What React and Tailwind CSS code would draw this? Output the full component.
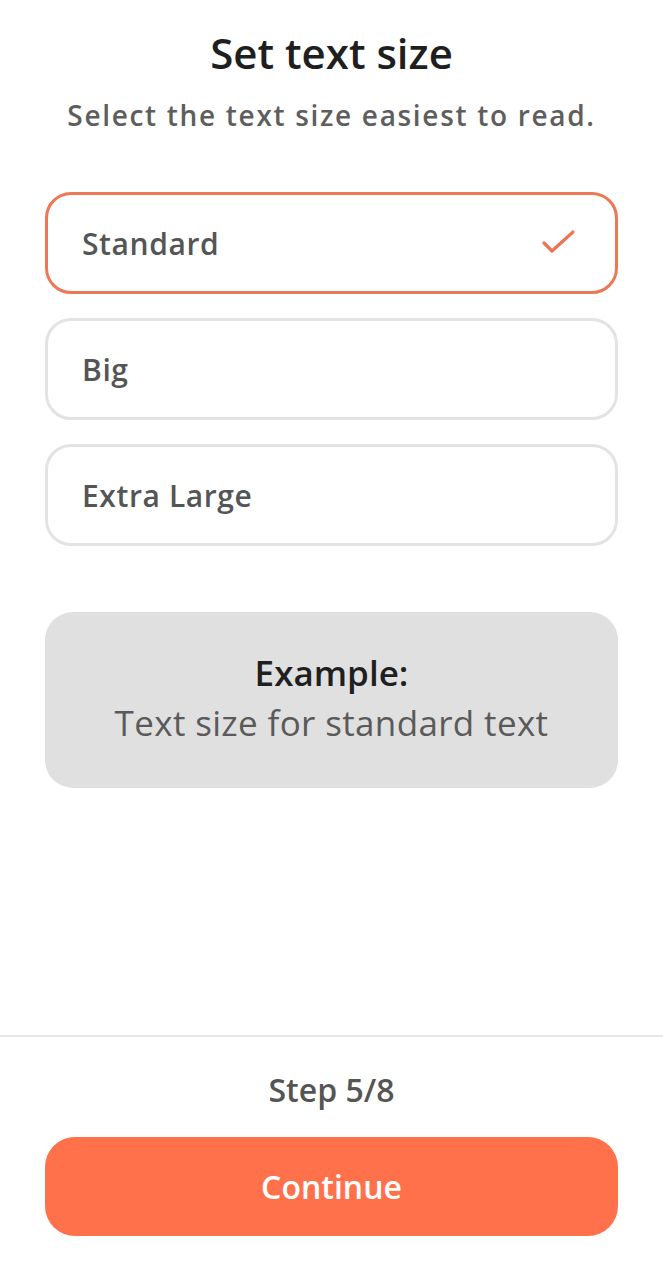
import React, { useState } from "react";

const options = ["Standard", "Big", "Extra Large"];

const CheckMark = () => (
  <svg width="38" height="30" viewBox="0 0 38 30" fill="none">
    <path
      d="M5 15 L13 23 L34 4"
      stroke="#ef7352"
      strokeWidth="3.2"
      strokeLinecap="round"
      strokeLinejoin="round"
    />
  </svg>
);

const App = () => {
  const [selected, setSelected] = useState("Standard");

  return (
    <div
      className="min-h-screen bg-white flex flex-col"
      style={{ fontFamily: "'Open Sans', Lato, sans-serif" }}
    >
      <main className="px-[45px] pt-[27px] flex flex-col">
        <h1 className="text-center text-[42px] leading-[52px] font-semibold text-[#1f1f1f]">
          Set text size
        </h1>
        <p className="text-center text-[28px] leading-[36px] font-semibold text-[#5e5e5e] mt-[18px] tracking-[0.06em]">
          Select the text size easiest to read.
        </p>

        {/* opciones */}
        <div className="flex flex-col gap-[24px] mt-[59px]">
          {options.map((opt) => {
            const active = opt === selected;
            return (
              <button
                key={opt}
                onClick={() => setSelected(opt)}
                className={
                  active
                    ? "h-[102px] rounded-[26px] border-[3px] border-[#ee7755] bg-white flex items-center justify-between pl-[34px] pr-[38px] text-left"
                    : "h-[102px] rounded-[26px] border-[3px] border-[#e3e3e3] bg-white flex items-center justify-between pl-[34px] pr-[38px] text-left"
                }
              >
                <span className="text-[30px] font-semibold text-[#555555] tracking-[0.02em]">
                  {opt}
                </span>
                {active && <CheckMark />}
              </button>
            );
          })}
        </div>

        <div className="mt-[66px] h-[176px] rounded-[28px] bg-[#e0e0e0] flex flex-col items-center justify-center pb-[4px]">
          <span className="text-[35px] leading-[44px] font-semibold text-[#1f1f1f]">
            Example:
          </span>
          <span className="text-[35px] leading-[44px] text-[#5a5a5a] mt-[6px] tracking-[0.01em]">
            Text size for standard text
          </span>
        </div>
      </main>

      <footer className="mt-auto border-t-2 border-[#e8e8e8] px-[45px] pt-[35px] pb-[44px] flex flex-col items-center">
        <span className="text-[32px] leading-[36px] font-semibold text-[#555555]">
          Step 5/8
        </span>
        <button className="mt-[29px] w-full h-[99px] rounded-[30px] bg-[#ff714a] text-white text-[32px] font-semibold">
          Continue
        </button>
      </footer>
    </div>
  );
};

export default App;
